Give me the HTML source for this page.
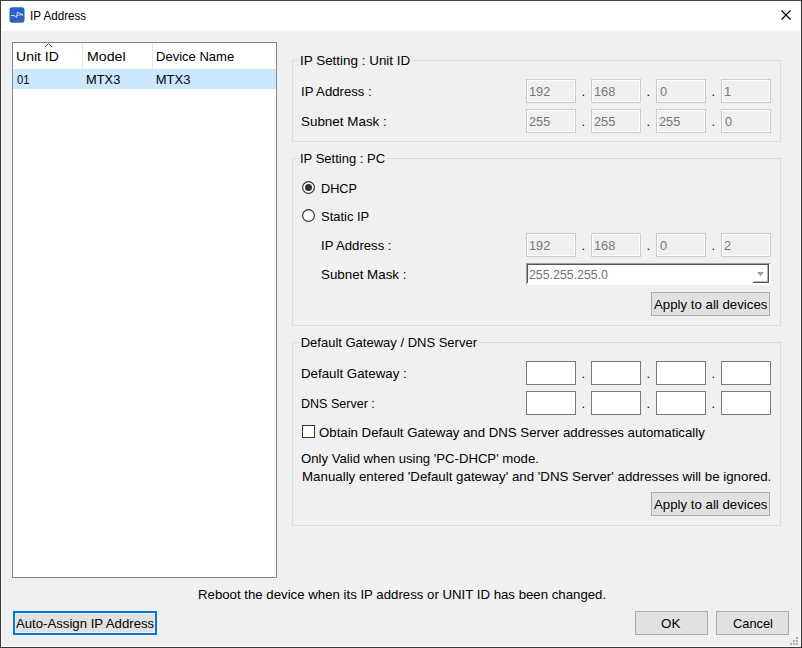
<!DOCTYPE html>
<html><head><meta charset="utf-8">
<style>
*{box-sizing:border-box;margin:0;padding:0}
html,body{width:802px;height:648px;overflow:hidden;background:#f0f0f0}
body{position:relative;font-family:"Liberation Sans",sans-serif;font-size:13px;color:#000}
.a{position:absolute}
.t{position:absolute;white-space:pre;line-height:16px;font-size:13px;transform-origin:0 0}
.win{left:0;top:0;width:802px;height:648px;border:1px solid #3a3a3a;border-top-color:#444}
.inw{left:1px;top:1px;width:800px;height:646px;border:1px solid #fafafa}
.title{left:2px;top:1px;width:798px;height:30px;background:#fff}
.list{left:12px;top:42px;width:265px;height:536px;border:1px solid #828790;background:#fff}
.sep{width:1px;top:43px;height:26px;background:#e5e5e5}
.sel{left:13px;top:69px;width:263px;height:20px;background:#cce8ff}
.grp{left:292px;width:489px;border:1px solid #dcdcdc}
.gt{background:#f0f0f0;height:6px}
.ipd{width:50px;height:24px;border:1px solid #cccccc;background:#f0f0f0;box-shadow:inset 0 0 0 1px #fff}
.ipe{width:50px;height:24px;border:1px solid #7a7a7a;background:#fff}
.btn{height:24px;border:1px solid #adadad;background:#e1e1e1}
.radio{width:13px;height:13px;border-radius:50%;border:1px solid #333;background:#fff}
.dot{width:7px;height:7px;border-radius:50%;background:#333}
.chk{width:13px;height:13px;border:1px solid #333;background:#fff}
.grip{width:2px;height:2px;background:#b1b1b1}
</style></head><body>
<div class="a win"></div>
<div class="a inw"></div>
<div class="a title"></div>
<svg class="a" style="left:9px;top:7px" width="16" height="16" viewBox="0 0 16 16">
<rect x="0.5" y="0.3" width="15" height="15.4" rx="2.6" fill="#2d63c6"/>
<polyline points="2,8.5 5.5,8.6 7.5,10.6 8.4,5.3 14,7.9" fill="none" stroke="#fff" stroke-width="0.9" stroke-linejoin="round" stroke-opacity="0.9"/><path d="M7.8 8.3L14 7.9" stroke="#fff" stroke-width="0.9" stroke-opacity="0.75"/>
</svg>
<svg class="a" style="left:780px;top:9px" width="12" height="12" viewBox="0 0 12 12">
<path d="M1.5 1.5L10.5 10.5M10.5 1.5L1.5 10.5" stroke="#000" stroke-width="1.1"/>
</svg>

<div class="a list"></div>
<div class="a sep" style="left:82px"></div>
<div class="a sep" style="left:152px"></div>
<div class="a sel"></div>
<svg class="a" style="left:44px;top:42px" width="9" height="6" viewBox="0 0 9 6">
<path d="M1 5L4.5 1.5L8 5" fill="none" stroke="#555" stroke-width="1"/>
</svg>

<div class="a grp" style="top:60px;height:82px"></div>
<div class="a gt" style="left:299px;top:57px;width:113px"></div>
<div class="a grp" style="top:158px;height:168px"></div>
<div class="a gt" style="left:299px;top:155px;width:87px"></div>
<div class="a grp" style="top:342px;height:184px"></div>
<div class="a gt" style="left:299px;top:339px;width:180px"></div>

<div class="a ipd" style="left:526px;top:79px"></div>
<div class="a ipd" style="left:591px;top:79px"></div>
<div class="a ipd" style="left:656px;top:79px"></div>
<div class="a ipd" style="left:721px;top:79px"></div>
<div class="a ipd" style="left:526px;top:109px"></div>
<div class="a ipd" style="left:591px;top:109px"></div>
<div class="a ipd" style="left:656px;top:109px"></div>
<div class="a ipd" style="left:721px;top:109px"></div>

<svg class="a" style="left:302px;top:181px" width="13" height="13" viewBox="0 0 13 13"><circle cx="6.5" cy="6.5" r="5.9" fill="#fff" stroke="#333" stroke-width="1.2"/><circle cx="6.5" cy="6.5" r="3.5" fill="#333"/></svg>
<svg class="a" style="left:302px;top:209px" width="13" height="13" viewBox="0 0 13 13"><circle cx="6.5" cy="6.5" r="5.9" fill="#fff" stroke="#333" stroke-width="1.2"/></svg>

<div class="a ipd" style="left:526px;top:233px"></div>
<div class="a ipd" style="left:591px;top:233px"></div>
<div class="a ipd" style="left:656px;top:233px"></div>
<div class="a ipd" style="left:721px;top:233px"></div>

<div class="a" style="left:526px;top:263px;width:245px;height:22px;background:#fff;border-top:1px solid #a0a0a0;border-left:1px solid #a0a0a0;border-right:1px solid #fff;border-bottom:1px solid #fff"></div>
<div class="a" style="left:527px;top:264px;width:242px;height:19px;border-top:1px solid #555;border-left:1px solid #555;"></div>
<div class="a" style="left:753px;top:264px;width:16px;height:19px;border-right:1px solid #555;border-bottom:1px solid #555"></div>
<div class="a" style="left:754px;top:265px;width:14px;height:17px;border-right:1px solid #b4b4b4;border-bottom:1px solid #b4b4b4"></div>
<svg class="a" style="left:756px;top:271px" width="10" height="6" viewBox="0 0 10 6"><path d="M1 1H8L4.5 5Z" fill="#999"/></svg>

<div class="a btn" style="left:651px;top:292px;width:119px"></div>

<div class="a ipe" style="left:526px;top:361px"></div>
<div class="a ipe" style="left:591px;top:361px"></div>
<div class="a ipe" style="left:656px;top:361px"></div>
<div class="a ipe" style="left:721px;top:361px"></div>
<div class="a ipe" style="left:526px;top:391px"></div>
<div class="a ipe" style="left:591px;top:391px"></div>
<div class="a ipe" style="left:656px;top:391px"></div>
<div class="a ipe" style="left:721px;top:391px"></div>

<div class="a chk" style="left:302px;top:425px"></div>
<div class="a btn" style="left:651px;top:492px;width:119px"></div>

<div class="a" style="left:13px;top:611px;width:144px;height:24px;border:2px solid #0078d7;background:#e1e1e1;box-shadow:inset 0 0 0 1px #f3f3f3"></div>
<div class="a btn" style="left:635px;top:611px;width:73px"></div>
<div class="a btn" style="left:716px;top:611px;width:73px"></div>

<div class="a grip" style="left:796px;top:637px"></div>
<div class="a grip" style="left:793px;top:640px"></div>
<div class="a grip" style="left:796px;top:640px"></div>
<div class="a grip" style="left:790px;top:643px"></div>
<div class="a grip" style="left:793px;top:643px"></div>
<div class="a grip" style="left:796px;top:643px"></div>

<div class="t" style="left:29.60px;top:8px;transform:scaleX(0.8967);">IP Address</div>
<div class="t" style="left:16.42px;top:49px;transform:scaleX(1.0789);">Unit ID</div>
<div class="t" style="left:86.71px;top:49px;transform:scaleX(1.0912);">Model</div>
<div class="t" style="left:156.30px;top:49px;transform:scaleX(1.0026);">Device Name</div>
<div class="t" style="left:16.60px;top:72px;transform:scaleX(0.8571);">01</div>
<div class="t" style="left:86.01px;top:72px;transform:scaleX(0.9909);">MTX3</div>
<div class="t" style="left:155.70px;top:72px;">MTX3</div>
<div class="t" style="left:299.97px;top:53px;transform:scaleX(1.0333);">IP Setting : Unit ID</div>
<div class="t" style="left:300.69px;top:84px;transform:scaleX(1.0118);">IP Address :</div>
<div class="t" style="left:300.97px;top:114px;transform:scaleX(1.0321);">Subnet Mask :</div>
<div class="t" style="left:300.00px;top:151px;">IP Setting : PC</div>
<div class="t" style="left:320.52px;top:181px;transform:scaleX(0.9771);">DHCP</div>
<div class="t" style="left:320.50px;top:209px;transform:scaleX(0.9957);">Static IP</div>
<div class="t" style="left:321.19px;top:238px;transform:scaleX(1.0088);">IP Address :</div>
<div class="t" style="left:321.47px;top:267px;transform:scaleX(1.0284);">Subnet Mask :</div>
<div class="t" style="left:529.45px;top:267px;transform:scaleX(0.9500);color:#737373;">255.255.255.0</div>
<div class="t" style="left:653.90px;top:297px;transform:scaleX(1.0189);">Apply to all devices</div>
<div class="t" style="left:300.70px;top:335px;">Default Gateway / DNS Server</div>
<div class="t" style="left:300.98px;top:366px;transform:scaleX(1.0238);">Default Gateway :</div>
<div class="t" style="left:301.04px;top:396px;transform:scaleX(0.9640);">DNS Server :</div>
<div class="t" style="left:319.38px;top:425px;transform:scaleX(1.0169);">Obtain Default Gateway and DNS Server addresses automatically</div>
<div class="t" style="left:301.49px;top:451px;transform:scaleX(1.0112);">Only Valid when using &#x27;PC-DHCP&#x27; mode.</div>
<div class="t" style="left:301.78px;top:469px;transform:scaleX(1.0232);">Manually entered &#x27;Default gateway&#x27; and &#x27;DNS Server&#x27; addresses will be ignored.</div>
<div class="t" style="left:653.90px;top:497px;transform:scaleX(1.0189);">Apply to all devices</div>
<div class="t" style="left:197.68px;top:587px;transform:scaleX(1.0170);">Reboot the device when its IP address or UNIT ID has been changed.</div>
<div class="t" style="left:16.20px;top:616px;transform:scaleX(1.0132);">Auto-Assign IP Address</div>
<div class="t" style="left:661.47px;top:616px;transform:scaleX(1.0294);">OK</div>
<div class="t" style="left:732.51px;top:616px;transform:scaleX(0.9872);">Cancel</div>
<div class="t" style="left:528.91px;top:84px;transform:scaleX(0.9850);color:#777;">192</div>
<div class="t" style="left:593.91px;top:84px;transform:scaleX(0.9850);color:#777;">168</div>
<div class="t" style="left:659.90px;top:84px;transform:scaleX(0.9850);color:#777;">0</div>
<div class="t" style="left:723.91px;top:84px;transform:scaleX(0.9850);color:#777;">1</div>
<div class="t" style="left:528.91px;top:114px;transform:scaleX(0.9850);color:#777;">255</div>
<div class="t" style="left:593.91px;top:114px;transform:scaleX(0.9850);color:#777;">255</div>
<div class="t" style="left:658.91px;top:114px;transform:scaleX(0.9850);color:#777;">255</div>
<div class="t" style="left:724.90px;top:114px;transform:scaleX(0.9850);color:#777;">0</div>
<div class="t" style="left:528.91px;top:238px;transform:scaleX(0.9850);color:#777;">192</div>
<div class="t" style="left:593.91px;top:238px;transform:scaleX(0.9850);color:#777;">168</div>
<div class="t" style="left:659.90px;top:238px;transform:scaleX(0.9850);color:#777;">0</div>
<div class="t" style="left:723.91px;top:238px;transform:scaleX(0.9850);color:#777;">2</div>
<div class="t" style="left:581.50px;top:84px;">.</div>
<div class="t" style="left:646.50px;top:84px;">.</div>
<div class="t" style="left:711.50px;top:84px;">.</div>
<div class="t" style="left:581.50px;top:114px;">.</div>
<div class="t" style="left:646.50px;top:114px;">.</div>
<div class="t" style="left:711.50px;top:114px;">.</div>
<div class="t" style="left:581.50px;top:238px;">.</div>
<div class="t" style="left:646.50px;top:238px;">.</div>
<div class="t" style="left:711.50px;top:238px;">.</div>
<div class="t" style="left:581.50px;top:366px;">.</div>
<div class="t" style="left:646.50px;top:366px;">.</div>
<div class="t" style="left:711.50px;top:366px;">.</div>
<div class="t" style="left:581.50px;top:396px;">.</div>
<div class="t" style="left:646.50px;top:396px;">.</div>
<div class="t" style="left:711.50px;top:396px;">.</div>
</body></html>
